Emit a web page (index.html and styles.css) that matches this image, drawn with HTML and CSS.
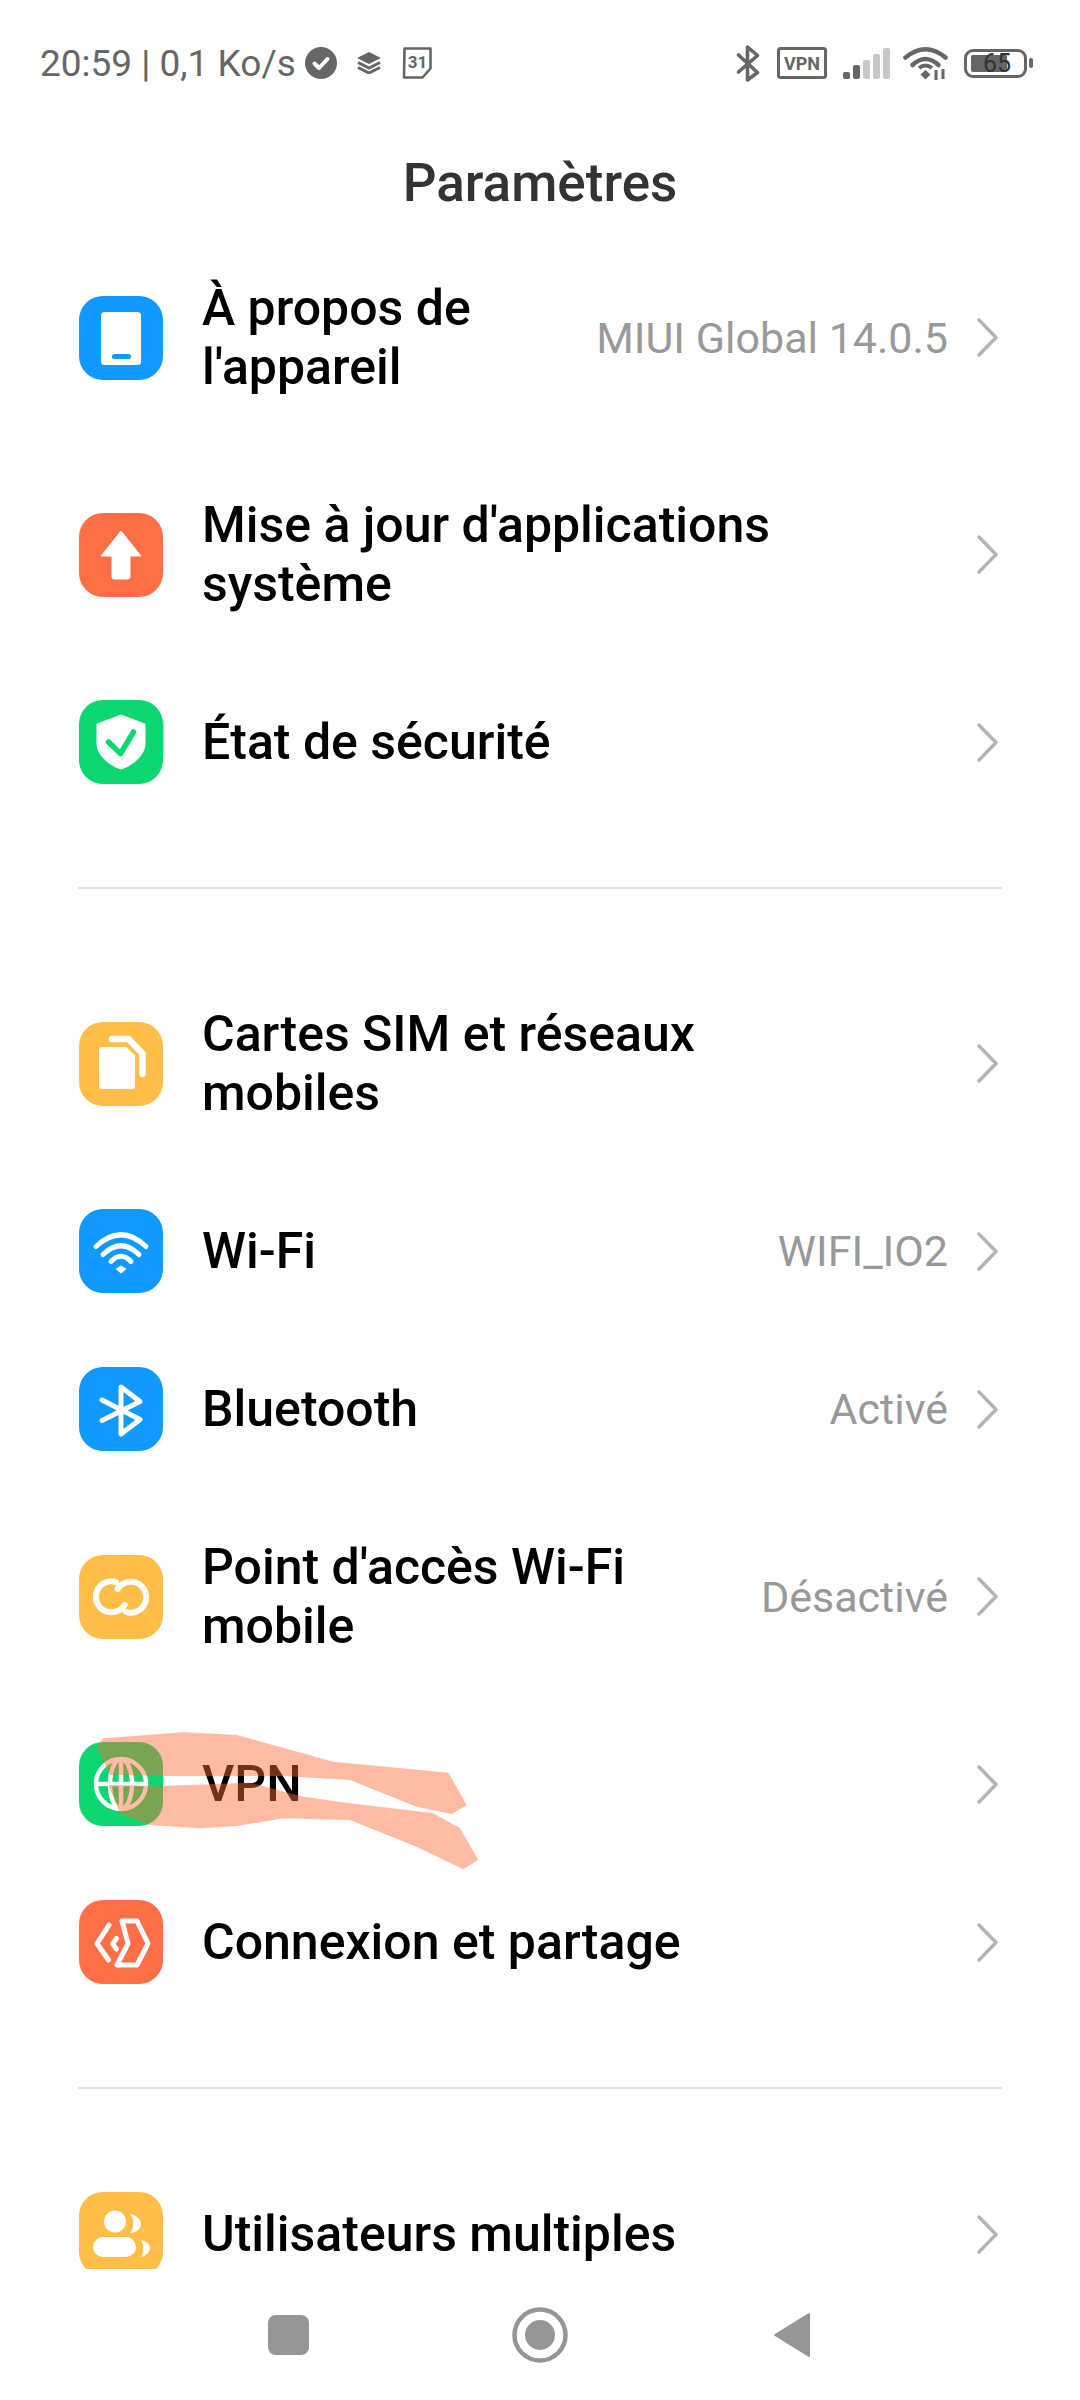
FILE: index.html
```html
<!DOCTYPE html>
<html lang="fr">
<head>
  <meta charset="UTF-8">
  <meta name="viewport" content="width=device-width, initial-scale=1.0">
  <title>Paramètres</title>
  <link rel="stylesheet" href="styles.css">
</head>
<body>
  <div class="page">
    <!-- Barre d'état -->
    <div class="status-bar">
      <div class="status-left">
        <span class="status-time">20:59 | 0,1 Ko/s</span>
        <svg class="st-check" viewBox="0 0 32 32"><circle cx="16" cy="16" r="16" fill="#666"/><path d="M9.5 16.5l4.5 4.5 8.5-9" fill="none" stroke="#fff" stroke-width="4" stroke-linecap="round" stroke-linejoin="round"/></svg>
        <svg class="st-layers" viewBox="0 0 24 22"><path d="M12 0l12 6-12 6L0 6z" fill="#666"/><path d="M1 10.5l11 5.5 11-5.5M1 15.5l11 5.5 11-5.5" fill="none" stroke="#666" stroke-width="3"/></svg>
        <svg class="st-cal" viewBox="0 0 31 32"><path d="M2.5 1.5h26v20l-8 9h-18.500z" fill="none" stroke="#666" stroke-width="2.600" stroke-linejoin="round"/><text x="15.500" y="21" class="st-cal-text">31</text></svg>
      </div>
      <div class="status-right">
        <svg class="st-bt" viewBox="0 0 24 37"><path d="M2.500 10l19 17.500L11.500 35V2l10 8.500L2.500 27" fill="none" stroke="#666" stroke-width="3.600" stroke-linecap="round" stroke-linejoin="round"/></svg>
        <svg class="st-vpn" viewBox="0 0 50 32"><rect x="1.500" y="1.500" width="47" height="29" rx="2" fill="none" stroke="#666" stroke-width="3"/><text x="25" y="22.500" class="st-vpn-text">VPN</text></svg>
        <svg class="st-signal" viewBox="0 0 47 31">
          <rect x="0" y="24" width="7" height="7" rx="2" fill="#666"/>
          <rect x="10" y="17" width="7" height="14" rx="2" fill="#666"/>
          <rect x="20" y="12" width="7" height="19" rx="2" fill="#c8c8c8"/>
          <rect x="30" y="6" width="7" height="25" rx="2" fill="#c8c8c8"/>
          <rect x="40" y="0" width="7" height="31" rx="2" fill="#c8c8c8"/>
        </svg>
        <svg class="st-wifi" viewBox="0 0 45 34"><g fill="none" stroke="#666" stroke-width="4.500" stroke-linecap="round"><path d="M2.500 11.500Q22.500-5 42.500 11.500"/><path d="M9.500 19Q22.500 7 35.500 19"/></g><path d="M22.500 24l5 4.500-5 5-5-5z" fill="#666"/><path d="M16 22q6.500-5 13 0" fill="none" stroke="#666" stroke-width="4"/><path d="M33 24v10M40 23v10" stroke="#666" stroke-width="3"/></svg>
        <div class="battery">
          <div class="battery-body">
            <div class="battery-fill"></div>
            <span class="battery-text">65</span>
          </div>
          <div class="battery-nub"></div>
        </div>
      </div>
    </div>

    <div class="title">Paramètres</div>

    <!-- Liste des réglages -->
    <div class="list">
      <div class="row tall">
        <svg class="icon" viewBox="0 0 84 84"><rect width="84" height="84" rx="24" fill="#1099ff"/><rect x="22" y="16" width="40" height="53" rx="3.500" fill="#fff"/><rect x="33" y="58" width="19" height="5" rx="2.500" fill="#1099ff"/></svg>
        <div class="name">À propos de<br>l'appareil</div>
        <div class="value">MIUI Global 14.0.5</div>
        <svg class="chevron" viewBox="0 0 21 39"><path d="M2 2l17 17.500L2 37" fill="none" stroke="#b4b4b4" stroke-width="3.400" stroke-linecap="round" stroke-linejoin="round"/></svg>
      </div>
      <div class="row tall">
        <svg class="icon" viewBox="0 0 84 84"><rect width="84" height="84" rx="24" fill="#ff6f47"/><path d="M42 18l20 25H51v21a2 2 0 0 1-2 2H35a2 2 0 0 1-2-2V43H22z" fill="#fff" stroke="#fff" stroke-width="1" stroke-linejoin="round"/></svg>
        <div class="name">Mise à jour d'applications<br>système</div>
        <svg class="chevron" viewBox="0 0 21 39"><path d="M2 2l17 17.500L2 37" fill="none" stroke="#b4b4b4" stroke-width="3.400" stroke-linecap="round" stroke-linejoin="round"/></svg>
      </div>
      <div class="row">
        <svg class="icon" viewBox="0 0 84 84"><rect width="84" height="84" rx="24" fill="#0cd670"/><path d="M42 15l24 9v20c0 11-13 22-24 25-11-3-24-14-24-25V24z" fill="#fff" stroke="#fff" stroke-width="1" stroke-linejoin="round"/><path d="M29.500 42l12 11.500 13-21.500" fill="none" stroke="#0cd670" stroke-width="5.500" stroke-linecap="round" stroke-linejoin="round"/></svg>
        <div class="name">État de sécurité</div>
        <svg class="chevron" viewBox="0 0 21 39"><path d="M2 2l17 17.500L2 37" fill="none" stroke="#b4b4b4" stroke-width="3.400" stroke-linecap="round" stroke-linejoin="round"/></svg>
      </div>

      <div class="divider"></div>

      <div class="row tall">
        <svg class="icon" viewBox="0 0 84 84"><rect width="84" height="84" rx="24" fill="#ffbe48"/><path d="M23 25h24.500L56 33.500V64a3 3 0 0 1-3 3H23a3 3 0 0 1-3-3V28a3 3 0 0 1 3-3z" fill="#fff"/><path d="M33 17h16.500L63.500 31.500V52" fill="none" stroke="#fff" stroke-width="6.500" stroke-linecap="round" stroke-linejoin="round"/></svg>
        <div class="name">Cartes SIM et réseaux<br>mobiles</div>
        <svg class="chevron" viewBox="0 0 21 39"><path d="M2 2l17 17.500L2 37" fill="none" stroke="#b4b4b4" stroke-width="3.400" stroke-linecap="round" stroke-linejoin="round"/></svg>
      </div>
      <div class="row">
        <svg class="icon" viewBox="0 0 84 84"><rect width="84" height="84" rx="24" fill="#1099ff"/><g fill="none" stroke="#fff" stroke-width="5" stroke-linecap="round"><path d="M17 37.500Q42 14 67 37.500"/><path d="M24 45.500Q42 28 60 45.500"/><path d="M32 52.500Q42 42 52 52.500"/></g><path d="M42 56.500l5.500 3.500-5.500 4.500-5.500-4.500z" fill="#fff"/></svg>
        <div class="name">Wi-Fi</div>
        <div class="value">WIFI_IO2</div>
        <svg class="chevron" viewBox="0 0 21 39"><path d="M2 2l17 17.500L2 37" fill="none" stroke="#b4b4b4" stroke-width="3.400" stroke-linecap="round" stroke-linejoin="round"/></svg>
      </div>
      <div class="row">
        <svg class="icon" viewBox="0 0 84 84"><rect width="84" height="84" rx="24" fill="#1099ff"/><path d="M23 33l38 19.500L42 67V20l19 14.500L23 53.500" fill="none" stroke="#fff" stroke-width="5" stroke-linecap="round" stroke-linejoin="round"/></svg>
        <div class="name">Bluetooth</div>
        <div class="value">Activé</div>
        <svg class="chevron" viewBox="0 0 21 39"><path d="M2 2l17 17.500L2 37" fill="none" stroke="#b4b4b4" stroke-width="3.400" stroke-linecap="round" stroke-linejoin="round"/></svg>
      </div>
      <div class="row tall">
        <svg class="icon" viewBox="0 0 84 84"><rect width="84" height="84" rx="24" fill="#ffbe48"/><g fill="none" stroke="#fff" stroke-width="6" stroke-linecap="round"><path d="M37 27A15.500 15.500 0 1 0 45.500 50"/><path d="M47 57A15.500 15.500 0 1 0 38.500 34"/></g></svg>
        <div class="name">Point d'accès Wi-Fi<br>mobile</div>
        <div class="value">Désactivé</div>
        <svg class="chevron" viewBox="0 0 21 39"><path d="M2 2l17 17.500L2 37" fill="none" stroke="#b4b4b4" stroke-width="3.400" stroke-linecap="round" stroke-linejoin="round"/></svg>
      </div>
      <div class="row">
        <svg class="icon" viewBox="0 0 84 84"><rect width="84" height="84" rx="24" fill="#0cd670"/><g fill="none" stroke="#fff" stroke-width="4.500"><circle cx="42" cy="42" r="25"/><ellipse cx="42" cy="42" rx="11" ry="25"/><path d="M17 42h50M42 17v50"/></g></svg>
        <div class="name">VPN</div>
        <svg class="chevron" viewBox="0 0 21 39"><path d="M2 2l17 17.500L2 37" fill="none" stroke="#b4b4b4" stroke-width="3.400" stroke-linecap="round" stroke-linejoin="round"/></svg>
      </div>
      <div class="row">
        <svg class="icon" viewBox="0 0 84 84"><rect width="84" height="84" rx="24" fill="#ff6f47"/><g fill="none" stroke="#fff" stroke-width="5" stroke-linecap="round" stroke-linejoin="round"><path d="M43 21h15l11 22.500L58 65H38l11-21.500z"/><path d="M30 25L18 43.500 29.500 60"/><path d="M37.500 38.500l-4 5.500 4 5"/></g></svg>
        <div class="name">Connexion et partage</div>
        <svg class="chevron" viewBox="0 0 21 39"><path d="M2 2l17 17.500L2 37" fill="none" stroke="#b4b4b4" stroke-width="3.400" stroke-linecap="round" stroke-linejoin="round"/></svg>
      </div>

      <div class="divider"></div>

      <div class="row">
        <svg class="icon" viewBox="0 0 84 84"><rect width="84" height="84" rx="24" fill="#ffbe48"/><circle cx="36" cy="29.500" r="11" fill="#fff"/><rect x="14" y="45" width="43" height="20" rx="10" fill="#fff"/><path d="M51 22c6 1 11 5 11 10s-5 9-11 9c4-4 5-14 0-19z" fill="#fff"/><path d="M62 48c5 1 9 4 9 8s-4 8-9 9c3-5 3-12 0-17z" fill="#fff"/></svg>
        <div class="name">Utilisateurs multiples</div>
        <svg class="chevron" viewBox="0 0 21 39"><path d="M2 2l17 17.500L2 37" fill="none" stroke="#b4b4b4" stroke-width="3.400" stroke-linecap="round" stroke-linejoin="round"/></svg>
      </div>
    </div>

    <!-- Barre de navigation -->
    <div class="nav-bar">
      <div class="nav-square"></div>
      <svg class="nav-home" viewBox="0 0 56 56"><circle cx="28" cy="28" r="25.500" fill="none" stroke="#969696" stroke-width="4.500"/><circle cx="28" cy="28" r="15" fill="#969696"/></svg>
      <svg class="nav-back" viewBox="0 0 38 46"><path d="M36 2v42L2 23z" fill="#969696" stroke="#969696" stroke-width="2" stroke-linejoin="round"/></svg>
    </div>

    <!-- Trait de feutre dessiné par-dessus la ligne VPN -->
    <svg class="scribble" viewBox="0 0 1350 960">
      <path d="M160 115L400 97 560 105 850 185 1195 218 1250 315 1205 342 1100 320 900 240 700 228 340 228 180 225 140 140z"/>
      <path d="M175 255L340 258 600 248 760 290 900 310 1150 340 1230 385 1285 480 1240 508 1100 440 900 360 700 355 560 378 450 385 300 375 210 340z"/>
    </svg>
  </div>
</body>
</html>
```

FILE: styles.css
```css
/* Page */
body {
  margin: 0;
  padding: 0;
  background: #fff;
  font-family: Roboto, 'Liberation Sans', sans-serif;
}

.page {
  position: relative;
  width: 1080px;
  height: 2400px;
  overflow: hidden;
  display: flex;
  flex-direction: column;
}

/* Barre d'état */
.status-bar {
  height: 126px;
  flex-shrink: 0;
  box-sizing: border-box;
  padding: 0 47px 0 40px;
  display: flex;
  justify-content: space-between;
  align-items: center;
  color: #666;
}

.status-left,
.status-right {
  display: flex;
  align-items: center;
}

.status-time {
  font-size: 37px;
  margin-right: 9px;
}

.st-check {
  width: 32px;
  height: 32px;
  margin-right: 20px;
}

.st-layers {
  width: 24px;
  height: 22px;
  margin-right: 21px;
}

.st-cal {
  width: 31px;
  height: 32px;
}

.st-cal-text {
  font-size: 17px;
  font-weight: 700;
  fill: #666;
  text-anchor: middle;
}

.st-bt {
  width: 24px;
  height: 37px;
  margin-right: 17px;
}

.st-vpn {
  width: 50px;
  height: 32px;
  margin-right: 16px;
}

.st-vpn-text {
  font-size: 18px;
  font-weight: 700;
  fill: #666;
  text-anchor: middle;
}

.st-signal {
  width: 47px;
  height: 31px;
  margin-right: 13px;
}

.st-wifi {
  width: 45px;
  height: 34px;
  margin-right: 16px;
}

.battery {
  display: flex;
  align-items: center;
  gap: 2px;
}

.battery-body {
  position: relative;
  width: 63px;
  height: 29px;
  box-sizing: border-box;
  border: 3px solid #666;
  border-radius: 9px;
  padding: 3px 4px;
}

.battery-fill {
  width: 36px;
  height: 100%;
  background: #666;
  border-radius: 2px;
}

.battery-text {
  position: absolute;
  left: 16px;
  top: -3px;
  font-size: 25px;
  line-height: 29px;
  color: #333;
}

.battery-nub {
  width: 4px;
  height: 10px;
  background: #666;
  border-radius: 2px;
}

/* Titre */
.title {
  height: 103px;
  flex-shrink: 0;
  box-sizing: border-box;
  padding-top: 22px;
  text-align: center;
  font-size: 53px;
  line-height: 70px;
  font-weight: 500;
  color: #333;
}

/* Liste */
.list {
  flex: 1;
  min-height: 0;
  overflow: hidden;
}

.row {
  height: 158px;
  box-sizing: border-box;
  padding: 0 82px 0 79px;
  display: flex;
  align-items: center;
}

.row.tall {
  height: 217px;
}

.icon {
  width: 84px;
  height: 84px;
  flex-shrink: 0;
  margin-right: 39px;
}

.name {
  flex: 1;
  font-size: 50px;
  line-height: 59px;
  font-weight: 500;
  color: #000;
}

.value {
  font-size: 43px;
  color: #999;
  margin-right: 29px;
}

.chevron {
  width: 21px;
  height: 39px;
  flex-shrink: 0;
}

.divider {
  height: 2px;
  margin: 66px 78px;
  background: #e2e2e2;
}

/* Navigation */
.nav-bar {
  height: 131px;
  flex-shrink: 0;
  display: grid;
  grid-template-columns: repeat(3, 252px);
  justify-content: center;
  justify-items: center;
  align-items: center;
}

.nav-square {
  width: 41px;
  height: 40px;
  background: #969696;
  border-radius: 8px;
}

.nav-home {
  width: 56px;
  height: 56px;
}

.nav-back {
  width: 38px;
  height: 46px;
}

/* Trait de feutre */
.scribble {
  position: absolute;
  left: 50px;
  top: 1700px;
  width: 450px;
  height: 320px;
  pointer-events: none;
}

.scribble path {
  fill: rgb(255, 104, 51);
  fill-opacity: 0.45;
}
```
